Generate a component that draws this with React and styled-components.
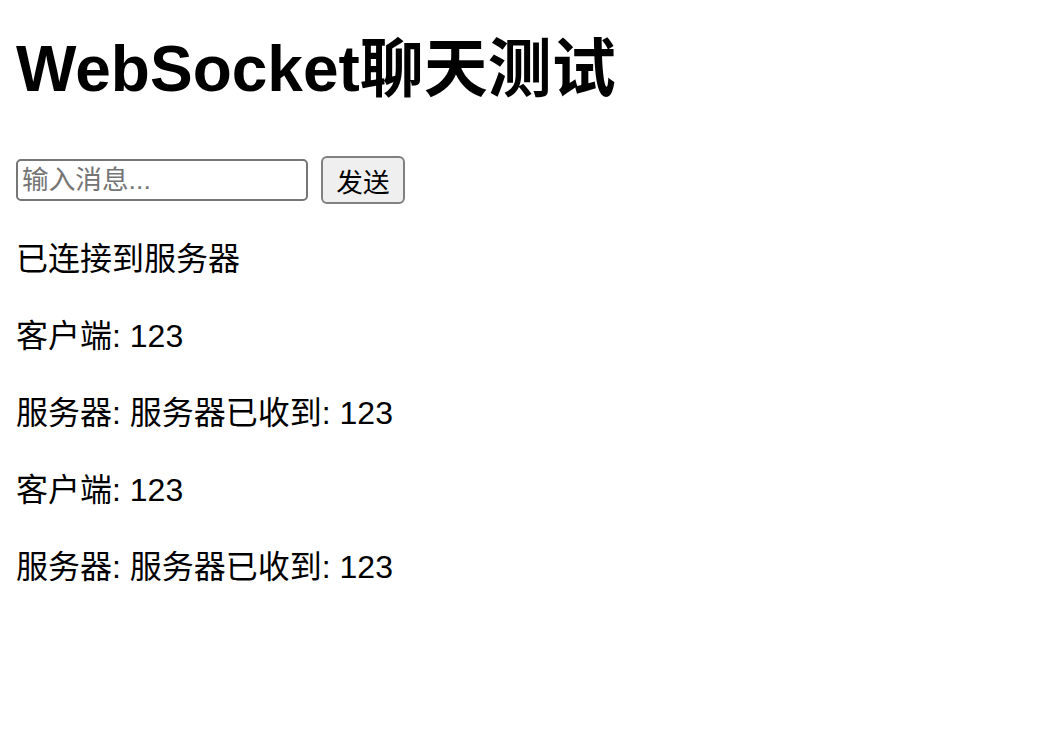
import React from "react";
import styled, { createGlobalStyle } from "styled-components";

const Global = createGlobalStyle`
  html, body { margin: 0; padding: 0; background: #fff; }
  body {
    font-family: "Liberation Sans", "Noto Sans CJK SC", sans-serif;
    color: #000;
  }
`;

const Page = styled.div`
  padding: 0 16px;
  display: flex;
  flex-direction: column;
`;

const Title = styled.h1`
  margin: 33px 0 51px;
  font-size: 64px;
  line-height: 72px;
  font-weight: 700;
`;

const InputRow = styled.div`
  display: flex;
  align-items: center;
  gap: 13px;
`;

const MessageInput = styled.input`
  box-sizing: border-box;
  width: 292px;
  height: 42px;
  border: 2px solid #767676;
  border-radius: 5px;
  padding: 0 4px;
  font-family: "Liberation Sans", "Noto Sans CJK SC", sans-serif;
  font-size: 26.67px;
  color: #000;
  background: #fff;
  outline: none;
  &::placeholder { color: #757575; }
`;

const SendButton = styled.button`
  box-sizing: border-box;
  width: 84px;
  height: 48px;
  border: 2px solid #808080;
  border-radius: 6px;
  background: #efefef;
  font-family: "Liberation Sans", "Noto Sans CJK SC", sans-serif;
  font-size: 26.67px;
  color: #000;
  padding: 0;
`;

const Messages = styled.div`
  display: flex;
  flex-direction: column;
  gap: 37px;
  margin-top: 35px;
`;

const Message = styled.p`
  margin: 0;
  font-size: 32px;
  line-height: 40px;
`;

const messages = [
  "已连接到服务器",
  "客户端: 123",
  "服务器: 服务器已收到: 123",
  "客户端: 123",
  "服务器: 服务器已收到: 123",
];

export default function App() {
  return (
    <>
      <Global />
      <Page>
        <Title>WebSocket聊天测试</Title>
        <InputRow>
          <MessageInput placeholder="输入消息..." />
          <SendButton>发送</SendButton>
        </InputRow>
        <Messages>
          {messages.map((m, i) => (
            <Message key={i}>{m}</Message>
          ))}
        </Messages>
      </Page>
    </>
  );
}
